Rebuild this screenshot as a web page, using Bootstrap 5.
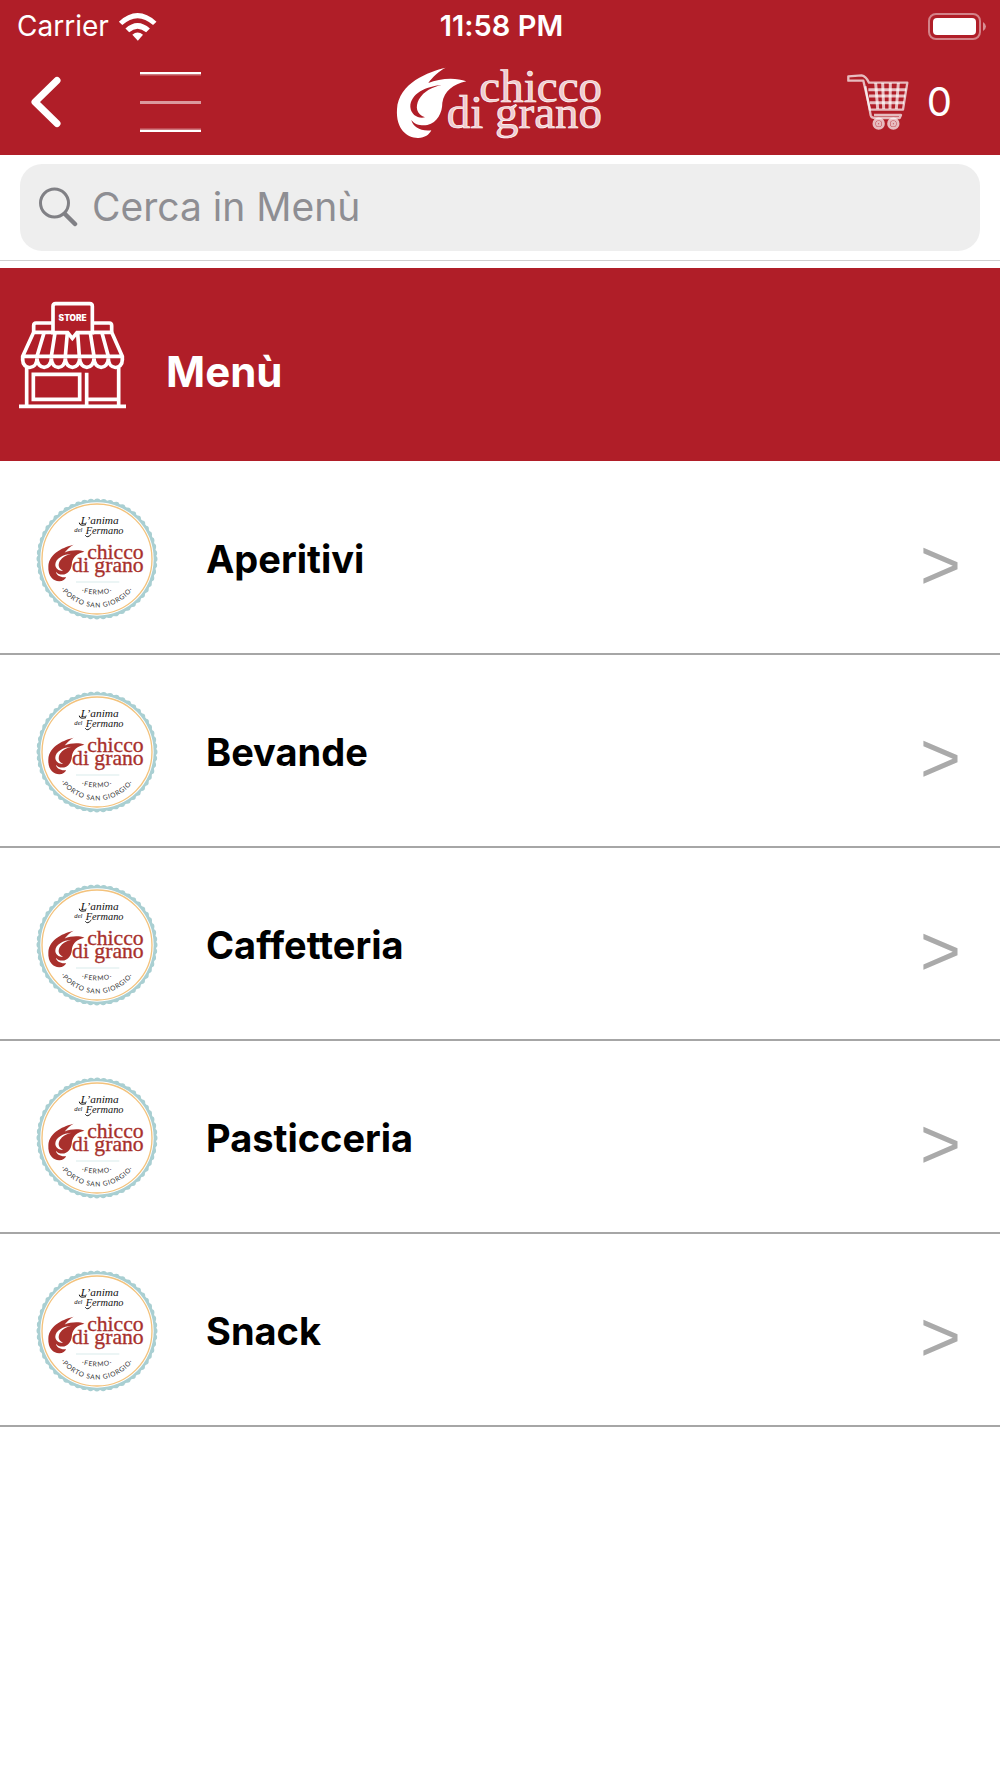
<!DOCTYPE html>
<html lang="it">
<head>
<meta charset="utf-8">
<meta name="viewport" content="width=device-width, initial-scale=1">
<title>Chicco di grano - Menù</title>
<link href="https://cdn.jsdelivr.net/npm/bootstrap@5.3.0/dist/css/bootstrap.min.css" rel="stylesheet">
<style>
  :root { --brand: #b01e28; }
  body { font-family: Inter, "Liberation Sans", sans-serif; background: #fff; color: #000; font-variant-ligatures: none; }
  svg { display: block; flex: none; }
  .brand-bg { background: var(--brand); color: #fff; }
  .status-bar { height: 50px; padding: 2px 14px 0 17px; font-size: 28px; line-height: 48px; }
  .status-bar .clock { font-size: 29px; font-weight: 600; }
  .top-nav { height: 105px; padding: 0 31px 2px; }
  .side { flex: 1 1 0; }
  .nav-start { gap: 79px; }
  .nav-end { gap: 18px; font-size: 40px; line-height: 48px; margin-right: 17px; }
  .plain { border: 0; padding: 0; background: none; color: inherit; text-decoration: none; }
  .search-area { padding: 9px 20px; border-bottom: 1px solid #cfcfcf; margin-bottom: 7px; }
  .search-box { height: 87px; border-radius: 22px; background: #eee; padding: 0 19px 2px; gap: 14px; }
  .search-box input { font-size: 39px; line-height: 48px; color: #333; }
  .search-box input::placeholder { color: #8e8e93; opacity: 1; }
  .section-head { height: 193px; padding: 33px 19px; gap: 40px; }
  .section-head h1 { font-size: 42px; line-height: 50px; font-weight: 700; margin: 46px 0 0; }
  .list-wrap { padding-top: 1px; }
  .menu-row { height: 193px; padding: 2px 39px 0 36px; gap: 48px; border-bottom: 2px solid #a6a6a6; color: #000; text-decoration: none; font-size: 38px; line-height: 46px; font-weight: 700; }
  .seal { font-weight: 400; }
  .chev { font: 400 70px/74px "Liberation Sans", Arial, sans-serif; color: #aaa; padding-top: 12px; }
</style>
<script src="https://cdn.jsdelivr.net/npm/bootstrap@5.3.0/dist/js/bootstrap.bundle.min.js"></script>
</head>
<body>
<header class="brand-bg">
  <div class="status-bar d-flex align-items-center">
    <div class="side d-flex align-items-center">
      <span>Carrier</span>
      <svg class="ms-2" width="41" height="29" viewBox="356 28 118 84" fill="#fff" aria-label="Wi-Fi">
        <path d="M361 56Q415 6 470 56L460 66Q415 26 371 66Z"/>
        <path d="M380 76Q415 44 451 76L440 87Q415 66 391 87Z"/>
        <path d="M400 94Q415 81 431 94L416 111Z"/>
      </svg>
    </div>
    <span class="clock">11:58 PM</span>
    <div class="side d-flex justify-content-end">
      <svg width="58" height="27" viewBox="0 0 58 27" aria-label="Batteria">
        <rect x="1" y="1" width="51" height="25" rx="7" fill="none" stroke="#fff" stroke-opacity=".45" stroke-width="2"/>
        <rect x="5" y="5" width="43" height="17" rx="4" fill="#fff"/>
        <path d="M55 9Q58 11 58 13.500T55 18Z" fill="#fff" fill-opacity=".5"/>
      </svg>
    </div>
  </div>
  <nav class="top-nav d-flex align-items-center">
    <div class="side nav-start d-flex align-items-center">
      <button class="plain" type="button" aria-label="Indietro">
        <svg width="30" height="52" viewBox="0 0 30 52" fill="none" stroke="#fff" stroke-width="7" stroke-linecap="round" stroke-linejoin="round"><path d="M26 4.500L4 26L26 47.500"/></svg>
      </button>
      <button class="plain" type="button" aria-label="Menu principale">
        <svg width="61" height="64" viewBox="0 0 61 64" fill="#fff">
          <path d="M0 2H61V4H0ZM0 60H61V62H0Z"/>
          <path d="M0 4H61V5.500H0ZM0 58.500H61V60H0Z" opacity=".4"/>
          <path d="M0 31H61V34H0Z" opacity=".55"/>
        </svg>
      </button>
    </div>
    <a class="plain" href="#" aria-label="Chicco di grano">
      <svg width="210" height="92" viewBox="0 -7 210 92">
        <g transform="translate(-16 -62) scale(.3333)">
          <path fill="#fff" d="M200 200C150 212 58 245 54 325C50 385 85 412 118 411C138 410 150 402 157 388C125 392 102 378 97 357C108 372 128 375 145 372C175 365 190 335 190 305C196 270 222 250 262 241C230 228 180 232 148 246C160 228 180 210 200 200Z"/>
          <path fill="#b01e28" d="M188 252C140 256 94 278 94 318C96 342 118 354 138 349C112 340 108 318 120 295C135 270 160 258 188 252Z"/>
        </g>
        <g fill="#f0c9cc" stroke="#fff" stroke-width=".7" font-family="Liberation Serif, serif" font-size="47" text-anchor="end">
          <text x="207" y="39">chicco</text><text x="207" y="65">di grano</text>
        </g>
      </svg>
    </a>
    <div class="side d-flex justify-content-end">
      <a class="plain nav-end d-flex align-items-center" href="#" aria-label="Carrello">
        <svg width="62" height="58" viewBox="138 218 186 174" fill="none" stroke="#fff" stroke-opacity=".7" stroke-width="7" stroke-linejoin="round">
          <path d="M142 228L182 225Q195 227 204 247H319L306 328H207L187 241L142 241Z"/>
          <path d="M193 258L209 345Q211 353 220 353H296L300 344H219"/>
          <path d="M202 268H316M204 287H313M207 307H309" stroke-width="9"/>
          <path d="M224 248L230 326M245 248L248 326M268 248L267 326M292 248L286 326" stroke-width="9"/>
          <circle cx="233" cy="370" r="14" stroke-width="9"/><circle cx="277" cy="370" r="14" stroke-width="9"/>
          <circle cx="233" cy="370" r="5"/><circle cx="277" cy="370" r="5"/>
        </svg>
        <span>0</span>
      </a>
    </div>
  </nav>
</header>

<main>
  <form class="search-area" role="search">
    <label class="search-box d-flex align-items-center">
      <svg width="39" height="40" viewBox="0 0 39 40" fill="none" stroke="#808085" stroke-linecap="round"><circle cx="15.500" cy="16" r="14" stroke-width="3"/><path d="M26 27L36 37" stroke-width="4.500"/></svg>
      <input class="plain flex-grow-1 w-100" type="text" placeholder="Cerca in Menù" aria-label="Cerca in Menù">
    </label>
  </form>

  <section class="section-head brand-bg d-flex align-items-start">
    <svg width="107" height="109" viewBox="57 108 321 327" fill="none" stroke="#fff" stroke-width="11">
      <path d="M159 203V124Q159 116 167 116H269Q277 116 277 124V203H231L217 220L203 203Z"/>
      <path d="M159 174H108Q101 174 101 182V202M277 174H328Q335 174 335 182V202"/>
      <path d="M101 202H159M277 202H335M101 202L68 274V286M335 202L367 274V286M68 274H367"/>
      <path d="M132 204L111 274M165 204L154 274M202 204L196 274M233 204L238 274M271 204L282 274M306 204L325 274"/>
      <path d="M68 284C68 316 111 316 111 280C111 316 154 316 154 280C154 316 196 316 196 280C196 316 239 316 239 280C239 316 282 316 282 280C282 316 325 316 325 280C325 316 367 316 367 284"/>
      <path d="M80 308V424M356 308V424M57 424H378M100 328H239V403H100ZM260 323V424M260 403H356"/>
      <text x="218" y="168" text-anchor="middle" font-family="Inter, sans-serif" font-weight="900" font-size="25" fill="#fff" stroke="none">STORE</text>
    </svg>
    <h1>Menù</h1>
  </section>

  <div class="list-wrap">
    <a class="menu-row d-flex align-items-center" href="#"><span class="seal"></span><span class="flex-grow-1">Aperitivi</span><span class="chev">&gt;</span></a>
    <a class="menu-row d-flex align-items-center" href="#"><span class="seal"></span><span class="flex-grow-1">Bevande</span><span class="chev">&gt;</span></a>
    <a class="menu-row d-flex align-items-center" href="#"><span class="seal"></span><span class="flex-grow-1">Caffetteria</span><span class="chev">&gt;</span></a>
    <a class="menu-row d-flex align-items-center" href="#"><span class="seal"></span><span class="flex-grow-1">Pasticceria</span><span class="chev">&gt;</span></a>
    <a class="menu-row d-flex align-items-center" href="#"><span class="seal"></span><span class="flex-grow-1">Snack</span><span class="chev">&gt;</span></a>
  </div>
</main>

<svg class="position-absolute" width="0" height="0" aria-hidden="true">
  <defs>
    <path id="arc-outer" d="M100 301A134 134 0 0 0 330 301"/>
    <path id="arc-inner" d="M150 314Q215 340 280 314"/>
  </defs>
</svg>
<template id="seal-art">
  <svg width="122" height="122" viewBox="32 38 366 366">
    <circle cx="215" cy="221" r="172" fill="none" stroke="#a9cfd2" stroke-width="12"/>
    <circle cx="215" cy="221" r="172" fill="none" stroke="#a9cfd2" stroke-width="19" stroke-linecap="round" pathLength="560" stroke-dasharray="0 10"/>
    <circle cx="215" cy="221" r="170" fill="#fff"/>
    <circle cx="215" cy="221" r="165" fill="none" stroke="#f3c27c" stroke-width="4"/>
    <g fill="#111" font-family="Liberation Serif, serif" font-style="italic">
      <text x="166" y="117" font-size="34">L’anima</text>
      <text x="147" y="141" font-size="20">del</text>
      <text x="181" y="147" font-size="31">Fermano</text>
    </g>
    <path d="M162 112Q162 123 182 118M180 150Q186 160 198 146" fill="none" stroke="#111" stroke-width="3"/>
    <g transform="translate(41 77) scale(.52)">
      <path fill="#a8302c" d="M200 200C150 212 58 245 54 325C50 385 85 412 118 411C138 410 150 402 157 388C125 392 102 378 97 357C108 372 128 375 145 372C175 365 190 335 190 305C196 270 222 250 262 241C230 228 180 232 148 246C160 228 180 210 200 200Z" transform="translate(0 -6)"/>
      <path fill="#fff" d="M188 246C140 250 94 272 94 312C96 336 118 348 138 343C112 334 108 312 120 289C135 264 160 252 188 246Z"/>
    </g>
    <g fill="#a8302c" stroke="#a8302c" stroke-width="1" font-family="Liberation Serif, serif" font-size="65" text-anchor="end">
      <text x="355" y="222">chicco</text><text x="355" y="260">di grano</text>
    </g>
    <path d="M152 290H282" stroke="#d9ebeb" stroke-width="3"/>
    <g fill="#333" font-family="Lato, sans-serif" font-size="20" text-anchor="middle" letter-spacing="2">
      <text><textPath href="#arc-inner" startOffset="50%">·FERMO·</textPath></text>
      <text><textPath href="#arc-outer" startOffset="50%">·PORTO SAN GIORGIO·</textPath></text>
    </g>
  </svg>
</template>
<script>
  const art = document.getElementById('seal-art');
  document.querySelectorAll('.seal').forEach(s => s.append(art.content.cloneNode(true)));
</script>
</body>
</html>
